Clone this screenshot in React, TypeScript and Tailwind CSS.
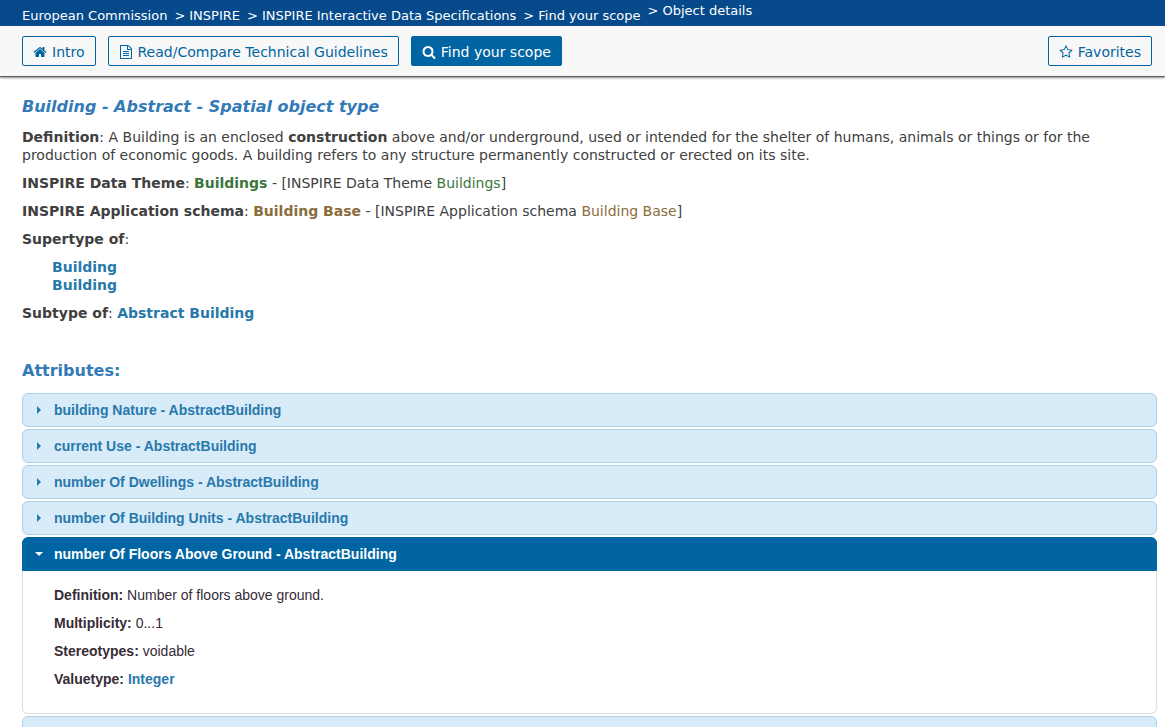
import { useState } from "react";
import type { ReactNode } from "react";

const ICONS = {
  home: "M1472 992v480q0 26-19 45t-45 19h-384v-384h-256v384h-384q-26 0-45-19t-19-45v-480q0-1 .5-3t.5-3l575-474 575 474q1 2 1 6zm223-69l-62 74q-8 9-21 11h-3q-13 0-21-7l-692-577-692 577q-12 8-24 7-13-2-21-11l-62-74q-8-10-7-23.5t11-21.5l719-599q32-26 76-26t76 26l244 204v-195q0-14 9-23t23-9h192q14 0 23 9t9 23v408l219 182q10 8 11 21.5t-7 23.5z",
  file: "M1596 380q28 28 48 76t20 88v1152q0 40-28 68t-68 28h-1344q-40 0-68-28t-28-68v-1600q0-40 28-68t68-28h896q40 0 88 20t76 48zm-444-244v376h376q-10-29-22-41l-313-313q-12-12-41-22zm384 1528v-1024h-416q-40 0-68-28t-28-68v-416h-768v1536h1280zm-1024-864q0-14 9-23t23-9h704q14 0 23 9t9 23v64q0 14-9 23t-23 9h-704q-14 0-23-9t-9-23v-64zm736 224q14 0 23 9t9 23v64q0 14-9 23t-23 9h-704q-14 0-23-9t-9-23v-64q0-14 9-23t23-9h704zm0 256q14 0 23 9t9 23v64q0 14-9 23t-23 9h-704q-14 0-23-9t-9-23v-64q0-14 9-23t23-9h704z",
  search: "M1216 832q0-185-131.5-316.5t-316.5-131.5-316.5 131.5-131.5 316.5 131.5 316.5 316.5 131.5 316.5-131.5 131.5-316.5zm512 832q0 52-38 90t-90 38q-54 0-90-38l-343-342q-179 124-399 124-143 0-273.5-55.5t-225-150-150-225-55.5-273.5 55.5-273.5 150-225 225-150 273.5-55.5 273.5 55.5 225 150 150 225 55.5 273.5q0 220-124 399l343 343q37 37 37 90z",
  star: "M1201 1004l306-297-422-62-189-382-189 382-422 62 306 297-73 421 378-199 377 199zm527-357q0 22-26 48l-363 354 86 500q1 7 1 20 0 50-41 50-19 0-40-12l-449-236-449 236q-22 12-40 12-21 0-31.5-14.5t-10.5-35.5q0-6 2-20l86-500-364-354q-25-27-25-48 0-37 56-46l502-73 225-455q19-41 49-41t49 41l225 455 502 73q56 9 56 46z",
};

const BREADCRUMBS = [
  "European Commission",
  "INSPIRE",
  "INSPIRE Interactive Data Specifications",
  "Find your scope",
];

const ATTRIBUTES = [
  { name: "building Nature - AbstractBuilding", definition: "Nature of the building.", multiplicity: "0...1", valueType: "BuildingNatureValue" },
  { name: "current Use - AbstractBuilding", definition: "Activity hosted within the building.", multiplicity: "0...*", valueType: "CurrentUse" },
  { name: "number Of Dwellings - AbstractBuilding", definition: "Number of dwellings.", multiplicity: "0...1", valueType: "Integer" },
  { name: "number Of Building Units - AbstractBuilding", definition: "Number of building units.", multiplicity: "0...1", valueType: "Integer" },
  { name: "number Of Floors Above Ground - AbstractBuilding", definition: "Number of floors above ground.", multiplicity: "0...1", valueType: "Integer" },
  { name: "", definition: "", multiplicity: "", valueType: "" },
];

function Icon({ name }: { name: keyof typeof ICONS }) {
  return (
    <svg viewBox="0 0 1792 1792" className="h-3.5 w-3.5 shrink-0 fill-current" aria-hidden="true">
      <path d={ICONS[name]} />
    </svg>
  );
}

function NavButton({ icon, active, children }: { icon: keyof typeof ICONS; active?: boolean; children: ReactNode }) {
  return (
    <button
      type="button"
      className={`flex h-[30px] items-center gap-[5px] rounded-xs border border-[#0065a2] px-2.5 pt-0.5 text-sm whitespace-nowrap ${
        active ? "bg-[#0065a2] text-white" : "text-[#0065a2]"
      }`}
    >
      <Icon name={icon} />
      <span>{children}</span>
    </button>
  );
}

function Attributes() {
  const [open, setOpen] = useState(4);

  return (
    <div className="flex flex-col gap-0.5 font-['Liberation_Sans',Arial,sans-serif] text-sm">
      {ATTRIBUTES.map((attr, i) => (
        <div key={i}>
          <h3>
            <button
              type="button"
              aria-expanded={open === i}
              aria-label={attr.name || "Next attribute"}
              onClick={() => setOpen(open === i ? -1 : i)}
              className={`flex h-[34px] w-full items-center gap-[11px] border pl-3 text-left font-bold ${
                open === i
                  ? "rounded-t-md border-[#0065a2] bg-[#0065a2] text-white"
                  : "rounded-md border-[#aed0ea] bg-[#d7ebf9] text-[#2779aa]"
              }`}
            >
              <svg viewBox="0 0 8 8" className="h-2 w-2 shrink-0 fill-current" aria-hidden="true">
                <path d={open === i ? "M0 2h8L4 6z" : "M2 0v8l4-4z"} />
              </svg>
              <span>{attr.name}</span>
            </button>
          </h3>
          {open === i && (
            <div className="flex flex-col gap-2 rounded-b-md border border-t-0 border-[#dddddd] px-[31px] pt-3.5 pb-6 text-[#362b36]">
              <p><strong>Definition:</strong> {attr.definition}</p>
              <p><strong>Multiplicity:</strong> {attr.multiplicity}</p>
              <p><strong>Stereotypes:</strong> voidable</p>
              <p>
                <strong>Valuetype:</strong>{" "}
                <a href="#valuetype" className="font-bold text-[#2779aa]">{attr.valueType}</a>
              </p>
            </div>
          )}
        </div>
      ))}
    </div>
  );
}

export default function App() {
  return (
    <div className="h-screen overflow-hidden bg-white font-['Verdana','DejaVu_Sans',sans-serif] text-sm text-[#404040]">
      <header>
        <nav aria-label="Breadcrumb" className="h-[26px] bg-[#064a8b] pt-px pl-[22px] text-[13px] leading-5 text-white">
          <ol className="flex items-start whitespace-nowrap">
            {BREADCRUMBS.map((crumb) => (
              <li key={crumb} className="flex gap-1 pt-[5px] pr-[7px]">
                {crumb !== BREADCRUMBS[0] && <span>&gt;</span>}
                <a href="#crumb">{crumb}</a>
              </li>
            ))}
            <li className="flex gap-1">
              <span>&gt;</span>
              <span>Object details</span>
            </li>
          </ol>
        </nav>
        <div className="flex items-center gap-3 border-b border-[#5f5f5f] bg-[#f8f8f8] py-2.5 pr-[13px] pl-[22px] shadow-[0_1px_2px_#888]">
          <NavButton icon="home">Intro</NavButton>
          <NavButton icon="file">Read/Compare Technical Guidelines</NavButton>
          <NavButton icon="search" active>Find your scope</NavButton>
          <div className="ml-auto">
            <NavButton icon="star">Favorites</NavButton>
          </div>
        </div>
      </header>

      <main className="pt-[19px] pr-2 pl-[22px]">
        <h1 className="text-base leading-[22px] font-bold text-[#337ab7] italic">
          Building - Abstract - Spatial object type
        </h1>
        <div className="mt-2.5 flex flex-col gap-2.5 leading-[18px]">
          <p>
            <strong>Definition</strong>: A Building is an enclosed <strong>construction</strong> above and/or
            underground, used or intended for the shelter of humans, animals or things or for the production of
            economic goods. A building refers to any structure permanently constructed or erected on its site.
          </p>
          <p>
            <strong>INSPIRE Data Theme</strong>:{" "}
            <a href="#theme" className="font-bold text-[#3c763d]">Buildings</a> - [INSPIRE Data Theme{" "}
            <a href="#theme" className="text-[#3c763d]">Buildings</a>]
          </p>
          <p>
            <strong>INSPIRE Application schema</strong>:{" "}
            <a href="#schema" className="font-bold text-[#8a6d3b]">Building Base</a> - [INSPIRE Application schema{" "}
            <a href="#schema" className="text-[#8a6d3b]">Building Base</a>]
          </p>
          <p><strong>Supertype of</strong>:</p>
          <ul className="pl-[30px] font-bold text-[#2779aa]">
            <li><a href="#building">Building</a></li>
            <li><a href="#building">Building</a></li>
          </ul>
          <p>
            <strong>Subtype of</strong>:{" "}
            <a href="#abstract" className="font-bold text-[#2779aa]">Abstract Building</a>
          </p>
        </div>
        <h2 className="mt-[38px] mb-[11px] text-base leading-[22px] font-bold text-[#337ab7]">Attributes:</h2>
        <Attributes />
      </main>
    </div>
  );
}
